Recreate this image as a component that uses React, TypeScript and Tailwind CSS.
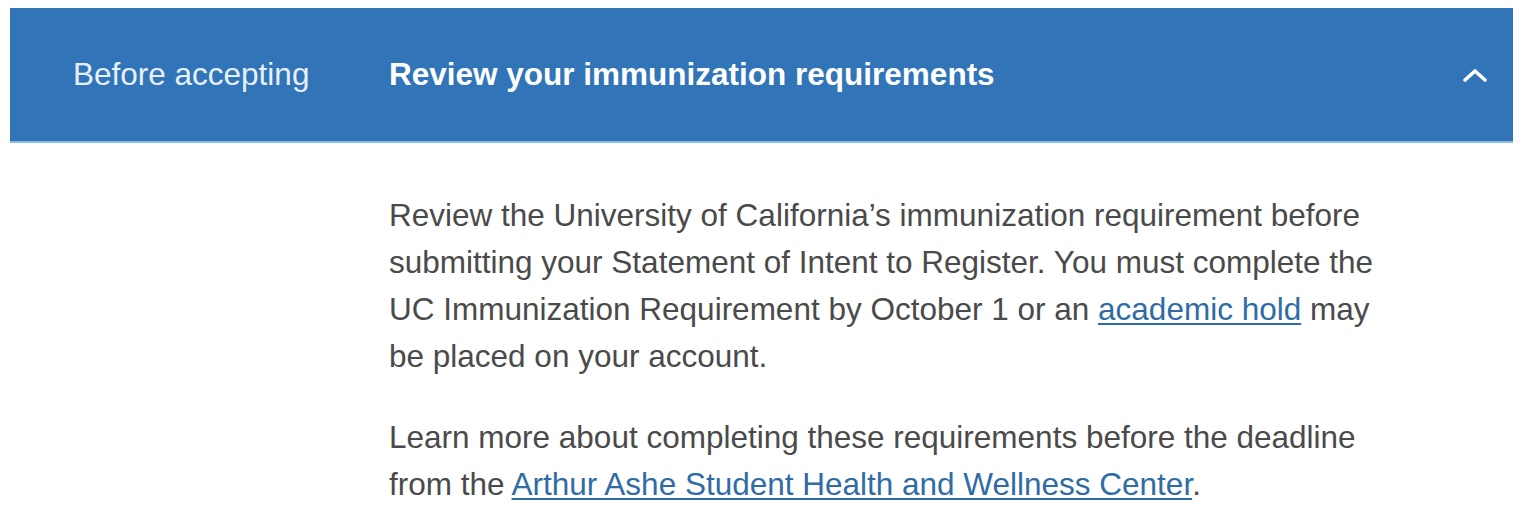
export default function App() {
  return (
    <div className="min-h-[522px] bg-white pt-[8px] font-['Liberation_Sans',Arial,sans-serif]">
      <div className="ml-[10px] mr-[11px]">
        {/* accordion header */}
        <div className="flex h-[135px] items-center border-b-2 border-[#8cbbe4] bg-[#3274b8] text-[31.5px] text-white">
          <div className="w-[379px] pl-[63px] text-[#e6f0fa]">Before accepting</div>
          <div className="flex-1 font-bold">Review your immunization requirements</div>
          <div className="pr-[24px]">
            <svg width="28" height="20" viewBox="0 0 28 20" fill="none">
              <path
                d="M4 15 L14 6 L24 15"
                stroke="white"
                strokeWidth="3.6"
                strokeLinecap="round"
                strokeLinejoin="round"
              />
            </svg>
          </div>
        </div>

        {/* body */}
        <div className="pl-[379px] pt-[49px] text-[31.5px] leading-[47px] text-[#4a4a4a]">
          <div className="max-w-[1012px]">
            <p>
              Review the University of California’s immunization requirement before
              submitting your Statement of Intent to Register. You must complete the UC
              Immunization Requirement by October 1 or an{" "}
              <a href="#" className="text-[#2f6ca5] underline decoration-2 underline-offset-[3px]">
                academic hold
              </a>{" "}
              may be placed on your account.
            </p>
            <p className="mt-[34px]">
              Learn more about completing these requirements before the deadline from the{" "}
              <a href="#" className="text-[#2f6ca5] underline decoration-2 underline-offset-[3px]">
                Arthur Ashe Student Health and Wellness Center
              </a>
              .
            </p>
          </div>
        </div>
      </div>
    </div>
  );
}
